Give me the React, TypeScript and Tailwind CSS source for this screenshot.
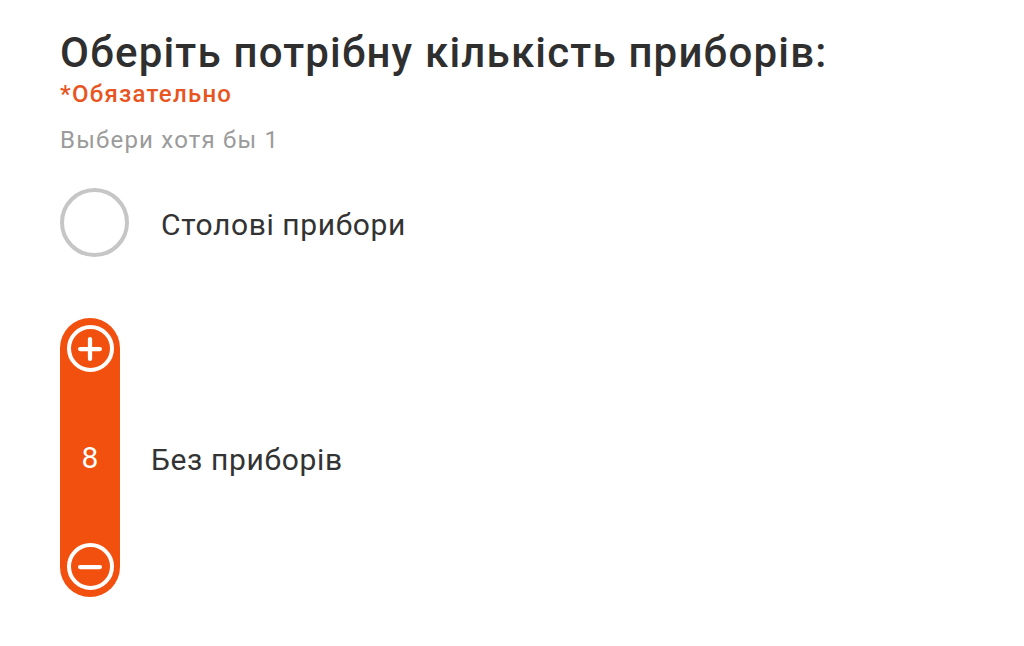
import { Plus, Minus } from "lucide-react";

function Stepper({ value }: { value: number }) {
  return (
    <div className="flex h-[279px] w-[60px] flex-col items-center justify-between rounded-full bg-[#f2500f] py-[7px]">
      <button className="flex h-[47px] w-[47px] items-center justify-center rounded-full border-[4px] border-white text-white">
        <Plus size={34} strokeWidth={3} />
      </button>
      <span className="text-[30px] leading-none text-white">{value}</span>
      <button className="flex h-[47px] w-[47px] items-center justify-center rounded-full border-[4px] border-white text-white">
        <Minus size={34} strokeWidth={3} />
      </button>
    </div>
  );
}

export default function App() {
  return (
    <div className="min-h-screen bg-white px-[60px] pt-[27px] font-['Roboto',sans-serif]">
      <h1 className="text-[42px] font-medium leading-[52px] tracking-[1.2px] text-[#2f2f2f]">
        Оберіть потрібну кількість приборів:
      </h1>
      <p className="mt-[1px] text-[24px] font-medium leading-[28px] tracking-[1.25px] text-[#e8551f]">
        *Обязательно
      </p>
      <p className="mt-[18px] text-[24px] leading-[28px] tracking-[1.2px] text-[#9b9b9b]">Выбери хотя бы 1</p>

      <div className="mt-[34px] flex items-center">
        <div className="h-[69px] w-[69px] rounded-full border-[4px] border-[#c6c6c6]" />
        <span className="ml-[32px] mt-[3px] text-[30px] tracking-[0.6px] text-[#333]">Столові прибори</span>
      </div>

      <div className="mt-[61px] flex items-center">
        <Stepper value={8} />
        <span className="ml-[31px] mt-[3px] text-[30px] tracking-[0.65px] text-[#333]">Без приборів</span>
      </div>
    </div>
  );
}
